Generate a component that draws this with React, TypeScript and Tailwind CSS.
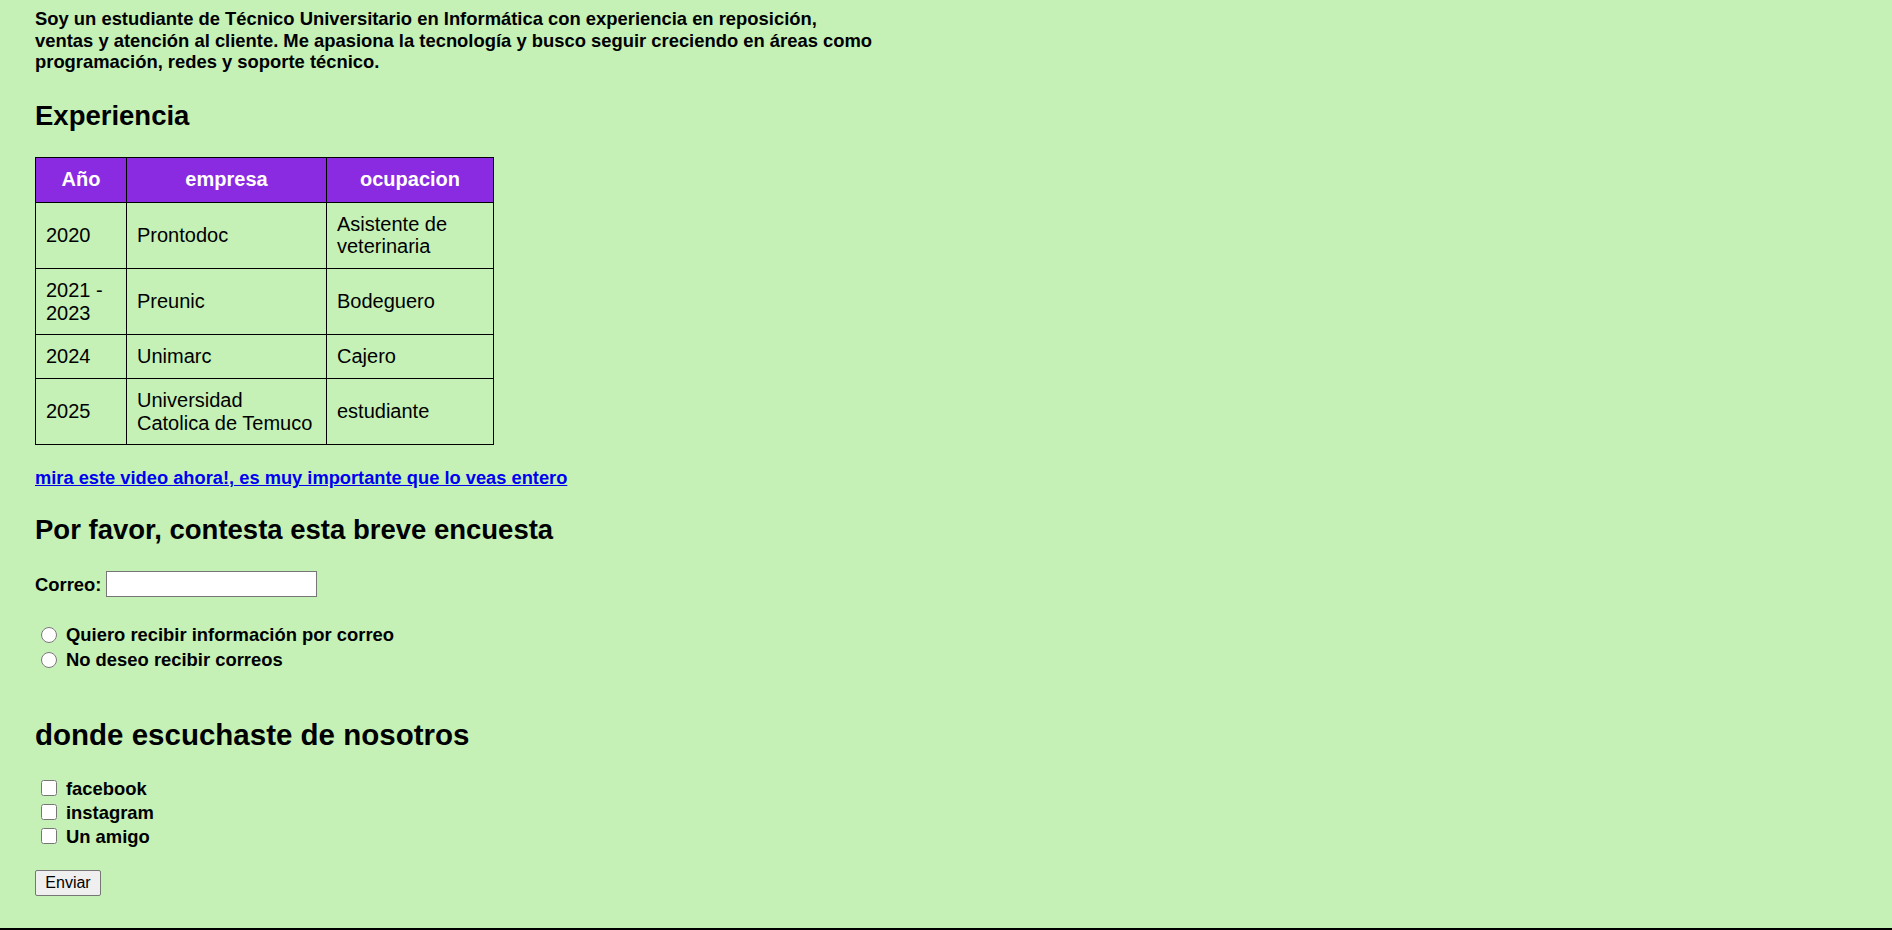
export default function App() {
  const rows = [
    { year: "2020", empresa: "Prontodoc", ocupacion: "Asistente de veterinaria" },
    { year: "2021 - 2023", empresa: "Preunic", ocupacion: "Bodeguero" },
    { year: "2024", empresa: "Unimarc", ocupacion: "Cajero" },
    { year: "2025", empresa: "Universidad Catolica de Temuco", ocupacion: "estudiante" },
  ];

  const gothic = "font-['Liberation_Sans',Arial,sans-serif] font-bold";

  return (
    <div className="h-[930px] w-full bg-[#c5f1b6] border-b-2 border-black text-black overflow-hidden">
      <div className="flex flex-col items-start px-[35px] pt-[8px]">
        {/* intro */}
        <p className={`${gothic} text-[18.4px] leading-[21.5px]`}>
          Soy un estudiante de Técnico Universitario en Informática con experiencia en reposición,
          <br />
          ventas y atención al cliente. Me apasiona la tecnología y busco seguir creciendo en áreas como
          <br />
          programación, redes y soporte técnico.
        </p>

        <h2 className={`${gothic} mt-[26px] text-[27.5px] leading-[34px]`}>Experiencia</h2>

        {/* tabla */}
        <table className="mt-[24px] border-collapse font-['Liberation_Sans',Arial,sans-serif] text-[20px] leading-[22.7px]">
          <thead>
            <tr className="bg-[#8a2be2] text-white">
              <th className="w-[91px] h-[45px] border border-black px-[10px] font-bold">Año</th>
              <th className="w-[200px] border border-black px-[10px] font-bold">empresa</th>
              <th className="w-[167px] border border-black px-[10px] font-bold">ocupacion</th>
            </tr>
          </thead>
          <tbody>
            {rows.map((r) => (
              <tr key={r.year}>
                <td className="border border-black px-[10px] py-[10px] align-middle">{r.year}</td>
                <td className="border border-black px-[10px] py-[10px] align-middle">{r.empresa}</td>
                <td className="border border-black px-[10px] py-[10px] align-middle">{r.ocupacion}</td>
              </tr>
            ))}
          </tbody>
        </table>

        <a href="#" className={`${gothic} mt-[22px] text-[18.3px] leading-[21px] text-[#0000ee] underline`}>
          mira este video ahora!, es muy importante que lo veas entero
        </a>

        <h2 className={`${gothic} mt-[25px] text-[27.5px] leading-[34px]`}>
          Por favor, contesta esta breve encuesta
        </h2>

        {/* formulario */}
        <form className="flex flex-col items-start" onSubmit={(e) => e.preventDefault()}>
          <div className="mt-[24px] flex h-[26px] items-center gap-[5px]">
            <label className={`${gothic} text-[18.4px]`}>Correo:</label>
            <input
              type="email"
              className="h-[26px] w-[211px] border border-[#767676] bg-white px-1 text-[16px]"
            />
          </div>

          <div className="mt-[25px] flex flex-col">
            <label className="flex h-[25px] items-center gap-[9px] pl-[6px]">
              <input type="radio" name="correo" className="m-0 h-[16px] w-[16px]" />
              <span className={`${gothic} text-[18.4px]`}>Quiero recibir información por correo</span>
            </label>
            <label className="flex h-[25px] items-center gap-[9px] pl-[6px]">
              <input type="radio" name="correo" className="m-0 h-[16px] w-[16px]" />
              <span className={`${gothic} text-[18.4px]`}>No deseo recibir correos</span>
            </label>
          </div>

          <h2 className={`${gothic} mt-[46px] text-[29.5px] leading-[34px]`}>donde escuchaste de nosotros</h2>

          <div className="mt-[24px] flex flex-col">
            {["facebook", "instagram", "Un amigo"].map((o) => (
              <label key={o} className="flex h-[24px] items-center gap-[9px] pl-[6px]">
                <input type="checkbox" className="m-0 h-[16px] w-[16px]" />
                <span className={`${gothic} text-[18.4px]`}>{o}</span>
              </label>
            ))}
          </div>

          <button
            type="submit"
            className="mt-[22px] h-[26px] w-[66px] rounded-[2px] border border-[#767676] bg-[#efefef] font-['Liberation_Sans',Arial,sans-serif] text-[16px] leading-none"
          >
            Enviar
          </button>
        </form>
      </div>
    </div>
  );
}
